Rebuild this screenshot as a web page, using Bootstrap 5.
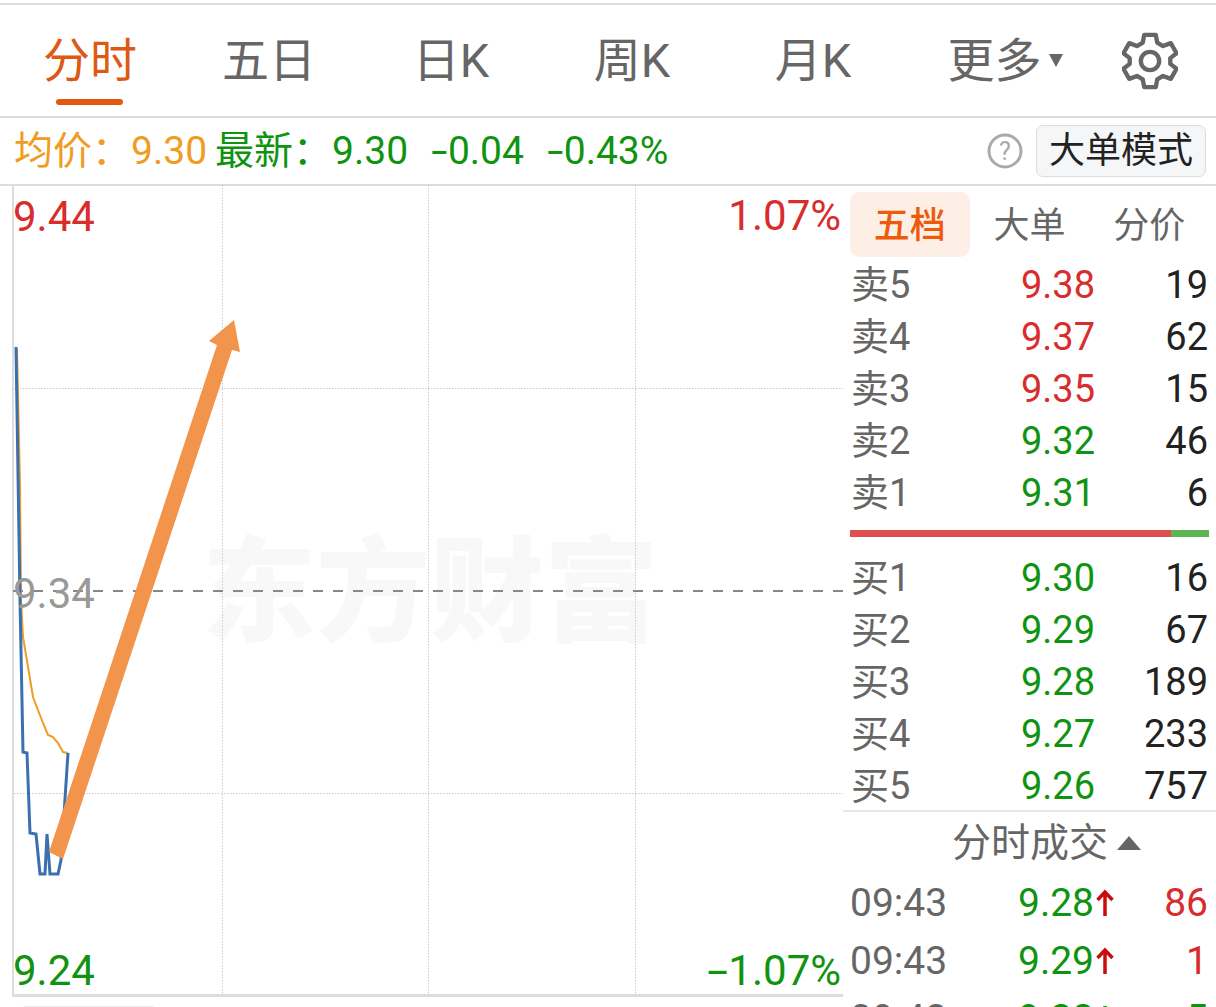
<!DOCTYPE html>
<html lang="zh">
<head>
<meta charset="utf-8">
<title>分时</title>
<link href="https://cdn.jsdelivr.net/npm/bootstrap@5.3.0/dist/css/bootstrap.min.css" rel="stylesheet">
<style>
html,body{height:1007px;overflow:hidden;background:#fff}
body{font-family:Roboto,"Noto Sans CJK SC",sans-serif;color:#222}
.topline{height:2px;margin-top:3px;background:#ddd}
.tabbar{height:113px;display:grid;grid-template-columns:180px 178px 186px 176px 186px 198px 92px;align-items:center;justify-items:center;border-bottom:2px solid #ddd;font-size:47px;color:#666;padding-top:1px}
.tabitem{position:relative;line-height:1.2;letter-spacing:0}
.tabactive{color:#dc5a14}
.tabactive::after{content:"";position:absolute;left:13px;right:14px;top:66px;height:6px;border-radius:3px;background:#e25a10}
.moretri{display:inline-block;width:0;height:0;border-left:7px solid transparent;border-right:7px solid transparent;border-top:13px solid #666;margin-left:7px;vertical-align:10px}
.inforow{height:68px;border-bottom:2px solid #ddd;font-size:39px;padding-left:14px;padding-right:10px}
.avg{color:#ef9c22}
.lat{color:#0f9310}
.gap-a{margin-left:8px}
.gap-b{margin-left:23px}
.dash{display:inline-block;transform:scaleX(1.5);margin:0 3px}
.dashlong{display:inline-block;transform:scaleX(1.8);margin:0 5px}
.modebtn{font-size:36px;line-height:1;border:1px solid #ddd;border-radius:7px;background:#f5f6f8;color:#222;height:52px;padding:0 12px;margin-left:13px;display:flex;align-items:center}
.mainrow{height:811px}
.chartbox{position:relative;width:831px;margin-left:12px;height:811px;border-left:2px solid #ddd;border-bottom:3px solid #ddd;flex:none}
.chartsvg{position:absolute;left:-14px;top:-1px;width:843px;height:811px}
.plabel{position:absolute;font-size:42px;line-height:1;white-space:nowrap}
.wmark{position:absolute;left:188px;top:339px;font-size:114px;font-weight:900;line-height:1.2;color:#f8f8f8;white-space:nowrap;letter-spacing:0}
.c-red{color:#d92d2d}
.c-grn{color:#0f9310}
.c-gry{color:#999}
.sidepanel{width:373px;flex:none;overflow:hidden;height:822px}
.sidetabs{height:73px;padding:6px 7px 0 7px;font-size:36px;color:#666}
.sidetab{width:120px;height:65px;padding-top:3px;display:flex;align-items:center;justify-content:center;border-radius:10px}
.sidetabon{background:#fdeee6;color:#ee5a0c;font-weight:500}
.qrow{height:52px;display:grid;grid-template-columns:143px 101px 1fr;align-items:center;font-size:38px;padding:0 8px 0 8px;line-height:1}
.qname{color:#666;font-size:38px}
.qnum{color:#222;text-align:right}
.qprice{text-align:right}
.ratiobar{height:7px;margin:11px 7px 15px 7px;display:flex;background:#e04f4f}
.ratiored{width:89.4%;background:#e04f4f}
.ratiogrn{flex:1;background:#5cb550}
.ticktitle{border-top:2px solid #e8e8e8;height:64px;font-size:39px;color:#666;margin-top:-2px;padding-left:34px}
.uptri{display:inline-block;width:0;height:0;border-left:12px solid transparent;border-right:12px solid transparent;border-bottom:14px solid #666;margin-left:9px;vertical-align:16px}
.trow{height:58px;display:grid;grid-template-columns:168px 96px 1fr;align-items:center;font-size:39px;padding:0 8px 0 7px;line-height:1}
.ttime{color:#666}
.tarrow{margin-left:2px;vertical-align:-1px}
.bottompill{position:absolute;left:6px;top:820px;width:137px;height:12px;border-radius:6px 6px 0 0;background:#eee}
</style>
</head>
<body>
<div class="topline"></div>
<div class="tabbar">
  <div class="tabitem tabactive">分时</div>
  <div class="tabitem">五日</div>
  <div class="tabitem">日K</div>
  <div class="tabitem">周K</div>
  <div class="tabitem">月K</div>
  <div class="tabitem">更多<span class="moretri"></span></div>
  <div class="tabitem d-flex">
    <svg width="56" height="58" viewBox="0 0 58 60" fill="none" stroke="#666" stroke-width="4.500" stroke-linejoin="round"><path d="M23 3h12l1.500 8 6 3.500 8-3 6 10.500-6.500 5v6l6.500 5-6 10.500-8-3-6 3.500-1.500 8H23l-1.500-8-6-3.500-8 3-6-10.500 6.500-5v-6L1.500 22l6-10.500 8 3 6-3.500z"/><circle cx="29" cy="30" r="9.500"/></svg>
  </div>
</div>
<div class="inforow d-flex align-items-center">
  <span class="avg">均价：</span><span class="avg">9.30</span>
  <span class="lat gap-a">最新：</span><span class="lat">9.30</span>
  <span class="lat gap-b"><span class="dash">-</span>0.04</span><span class="lat gap-b"><span class="dash">-</span>0.43%</span>
  <svg class="ms-auto" width="36" height="36" viewBox="0 0 36 36"><circle cx="18" cy="18" r="16" fill="none" stroke="#aaa" stroke-width="3"/><text x="18" y="27" font-size="25" text-anchor="middle" fill="#aaa" font-family="Roboto">?</text></svg>
  <div class="modebtn">大单模式</div>
</div>
<div class="mainrow d-flex">
  <div class="chartbox">
    <div class="wmark">东方财富</div>
    <svg class="chartsvg" viewBox="0 0 843 811" fill="none">
      <g stroke="#ccc" stroke-width="1" stroke-dasharray="1.5 1.5">
        <path d="M222.500 0V809M428.500 0V809M635.500 0V809"/>
        <path d="M14 203.500H843M14 608.500H843"/>
      </g>
      <path d="M13 406H843" stroke="#888" stroke-width="2" stroke-dasharray="10 10"/>
      <path d="M17 164 20 300 21 415 23 452 33 512 36 520 43 538 48 550 53 552 58 558 63 567 68 568" stroke="#ef9c22" stroke-width="2"/>
      <path d="M16 162 20 415 23 567 27 568 30 648 36 649 40 689 45 689 47 649 50 689 58 689 61 675 68 568" stroke="#3a70b0" stroke-width="3"/>
      <path d="M49 667 63 674 232 165 240 167 234 135 209 156 217 160Z" fill="#f2944c"/>
    </svg>
    <div class="plabel c-red" style="left:-1px;top:10px">9.44</div>
    <div class="plabel c-gry" style="left:-1px;top:387px">9.34</div>
    <div class="plabel c-grn" style="left:-1px;top:764px">9.24</div>
    <div class="plabel c-red" style="right:2px;top:9px">1.07%</div>
    <div class="plabel c-grn" style="right:2px;top:764px"><span class="dashlong">-</span>1.07%</div>
    <div class="bottompill"></div>
  </div>
  <div class="sidepanel">
    <div class="sidetabs d-flex">
      <div class="sidetab sidetabon">五档</div>
      <div class="sidetab">大单</div>
      <div class="sidetab">分价</div>
    </div>
    <div class="qrow"><span class="qname">卖5</span><span class="qprice c-red">9.38</span><span class="qnum">19</span></div>
    <div class="qrow"><span class="qname">卖4</span><span class="qprice c-red">9.37</span><span class="qnum">62</span></div>
    <div class="qrow"><span class="qname">卖3</span><span class="qprice c-red">9.35</span><span class="qnum">15</span></div>
    <div class="qrow"><span class="qname">卖2</span><span class="qprice c-grn">9.32</span><span class="qnum">46</span></div>
    <div class="qrow"><span class="qname">卖1</span><span class="qprice c-grn">9.31</span><span class="qnum">6</span></div>
    <div class="ratiobar"><div class="ratiored"></div><div class="ratiogrn"></div></div>
    <div class="qrow"><span class="qname">买1</span><span class="qprice c-grn">9.30</span><span class="qnum">16</span></div>
    <div class="qrow"><span class="qname">买2</span><span class="qprice c-grn">9.29</span><span class="qnum">67</span></div>
    <div class="qrow"><span class="qname">买3</span><span class="qprice c-grn">9.28</span><span class="qnum">189</span></div>
    <div class="qrow"><span class="qname">买4</span><span class="qprice c-grn">9.27</span><span class="qnum">233</span></div>
    <div class="qrow"><span class="qname">买5</span><span class="qprice c-grn">9.26</span><span class="qnum">757</span></div>
    <div class="ticktitle d-flex align-items-center justify-content-center">分时成交<span class="uptri"></span></div>
    <div class="trow"><span class="ttime">09:43</span><span class="c-grn text-nowrap">9.28<svg class="tarrow" width="18" height="28" viewBox="0 0 18 28" fill="none" stroke="#c90d0d" stroke-width="3.500"><path d="M9 27V3M1.500 11 9 3l7.500 8"/></svg></span><span class="c-red text-end">86</span></div>
    <div class="trow"><span class="ttime">09:43</span><span class="c-grn text-nowrap">9.29<svg class="tarrow" width="18" height="28" viewBox="0 0 18 28" fill="none" stroke="#c90d0d" stroke-width="3.500"><path d="M9 27V3M1.500 11 9 3l7.500 8"/></svg></span><span class="c-red text-end">1</span></div>
    <div class="trow"><span class="ttime">09:43</span><span class="c-grn text-nowrap">9.28<svg class="tarrow" width="18" height="28" viewBox="0 0 18 28" fill="none" stroke="#0f9310" stroke-width="3.500"><path d="M9 1V25M1.500 17 9 25l7.500-8"/></svg></span><span class="c-grn text-end">5</span></div>
  </div>
</div>
<script src="https://cdn.jsdelivr.net/npm/bootstrap@5.3.0/dist/js/bootstrap.bundle.min.js"></script>
</body>
</html>
